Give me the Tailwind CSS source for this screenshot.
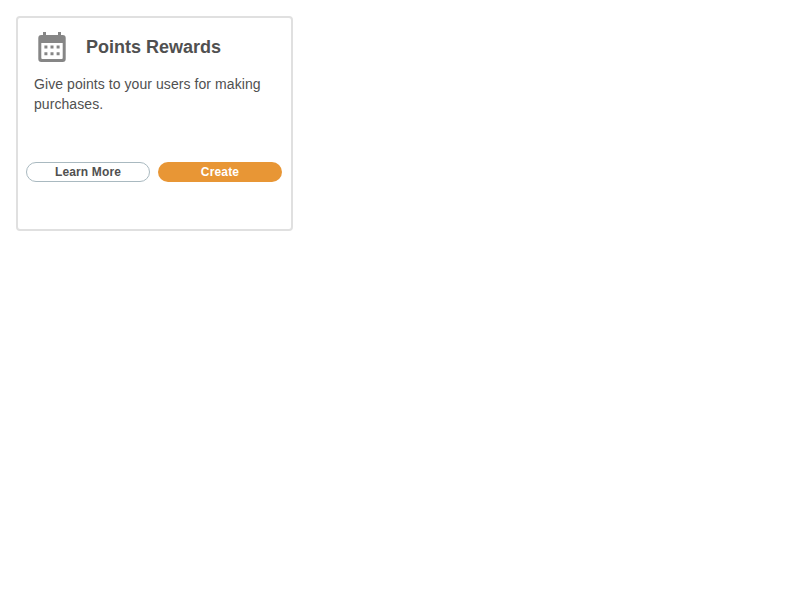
<!DOCTYPE html>
<html lang="en">
<head>
<meta charset="utf-8">
<title>Points Rewards</title>
<script src="https://cdn.jsdelivr.net/npm/@tailwindcss/browser@4"></script>
</head>
<body class="bg-white p-4 font-['Liberation_Sans',Arial,sans-serif] text-[#505050]">
<article class="flex h-[215px] w-[277px] flex-col rounded border-2 border-[#e0e0e0]">
  <header class="flex h-14 items-center pl-5 pt-0.5">
    <svg class="h-[30px] w-7 shrink-0" viewBox="0 0 28 30" fill="#868686" aria-hidden="true">
      <path fill-rule="evenodd" d="M5 0h3v3h12V0h3v3h1.7a3 3 0 0 1 3 3v21a3 3 0 0 1-3 3H3.3a3 3 0 0 1-3-3V6a3 3 0 0 1 3-3H5zM3.3 11v15a1 1 0 0 0 1 1h19.4a1 1 0 0 0 1-1V11z"/>
      <path d="M6.4 13.5h3v3h-3zM12.5 13.5h3v3h-3zM18.6 13.5h3v3h-3zM6.4 20.3h3v3h-3zM12.5 20.3h3v3h-3zM18.6 20.3h3v3h-3z"/>
    </svg>
    <h1 class="ml-5 text-lg leading-7 font-bold">Points Rewards</h1>
  </header>
  <p class="h-[88px] px-4 text-sm leading-5 tracking-[0.07px]">Give points to your users for making purchases.</p>
  <div class="flex gap-2 px-2">
    <button class="h-5 w-[124px] rounded-full border border-[#a9b9c0] text-xs font-bold tracking-[0.15px]">Learn More</button>
    <button class="h-5 w-[124px] rounded-full bg-[#e89635] text-xs font-bold tracking-[0.15px] text-white">Create</button>
  </div>
</article>
</body>
</html>
